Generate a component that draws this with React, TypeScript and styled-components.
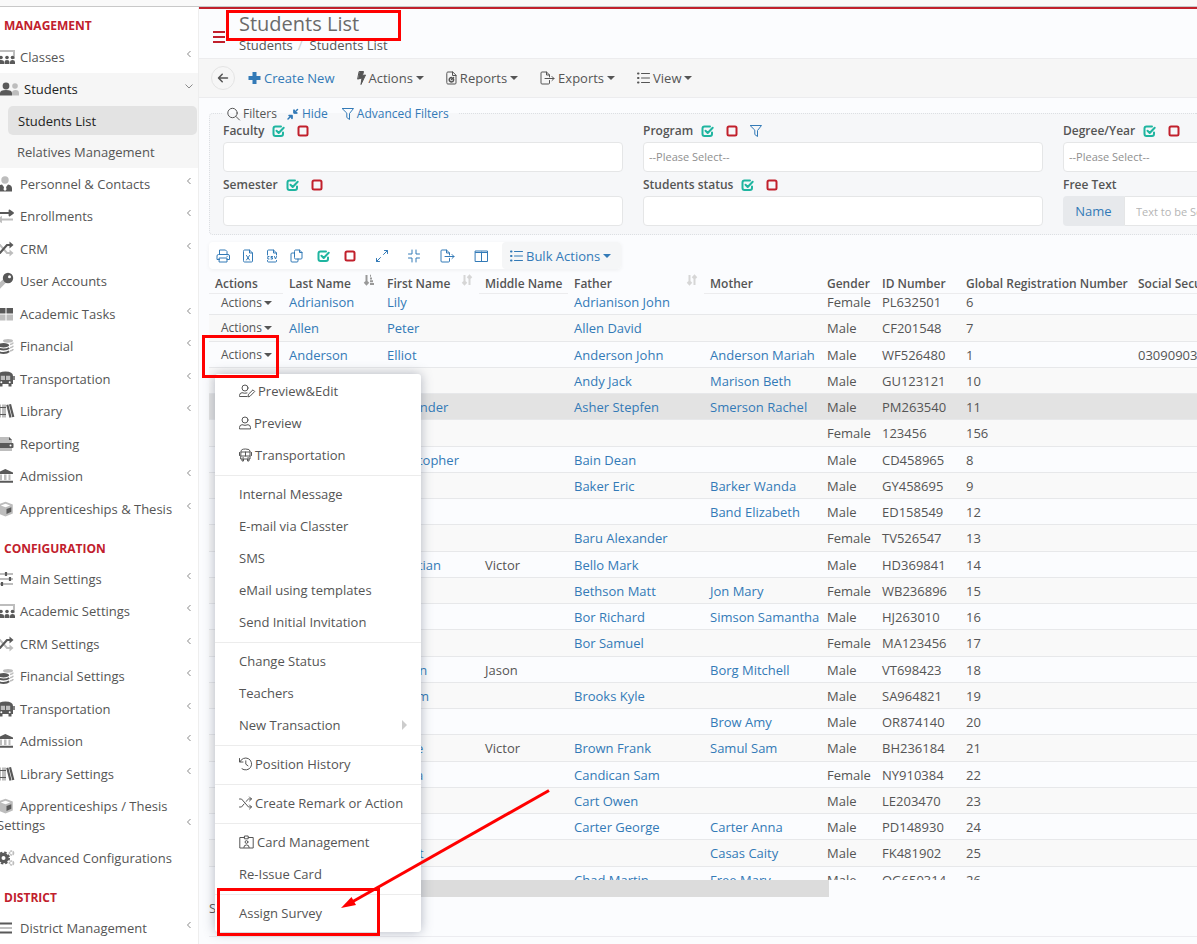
import React from 'react';
import styled, { createGlobalStyle, css } from 'styled-components';
import { FaArrowLeft } from 'react-icons/fa6';

const Global = createGlobalStyle`
  *, *::before, *::after { box-sizing: border-box; }
  html, body, #root { height: 100%; }
  body {
    margin: 0;
    overflow: hidden;
    background: #fbfcfe;
    color: #555;
    font: 13px/18px 'Open Sans', 'Liberation Sans', sans-serif;
  }
  button, input, select { font: inherit; color: inherit; }
  button { padding: 0; border: 0; background: none; cursor: pointer; }
  a { color: inherit; text-decoration: none; }
  ul { list-style: none; margin: 0; padding: 0; }
  svg { display: block; flex: none; overflow: visible; }
`;

const DARK = '#595959';
const LIGHT = '#bdbdbd';
const BLUE = '#337ab7';
const RED = '#c1202c';
const GREEN = '#1fb5a0';

/* ---------- icons ---------- */

type IconName =
  | 'classes' | 'students' | 'person' | 'swap' | 'shuffle' | 'key' | 'grid' | 'coins' | 'bus'
  | 'books' | 'drive' | 'bank' | 'cube' | 'sliders' | 'gears' | 'bars';

const duotone: Record<IconName, React.ReactNode> = {
  classes: (
    <>
      <path d="M0 2h17v8" fill="none" stroke={LIGHT} strokeWidth="2" />
      <g fill={DARK}>
        <circle cx="4" cy="8.500" r="1.800" /><circle cx="10" cy="8.500" r="1.800" /><circle cx="15.500" cy="8.500" r="1.800" />
        <path d="M1 15v-2q0-2 3-2t3 2v2zM7.500 15v-2q0-2 2.500-2t2.500 2v2zM13 15v-2q0-2 2.500-2t2.500 2v2z" />
      </g>
    </>
  ),
  students: (
    <>
      <g fill={LIGHT}><circle cx="15" cy="5" r="2.800" /><path d="M12 14.500V12q0-3 3.500-3t3.500 3v2.500z" /></g>
      <g fill={DARK}><circle cx="6" cy="5" r="3.400" /><path d="M0 14.500v-2.500q0-3 6-3t6 3v2.500z" /></g>
    </>
  ),
  person: (
    <>
      <circle cx="8" cy="4" r="3.700" fill={LIGHT} />
      <path d="M1 15.500v-3q0-3.500 4-4l3 4 3-4q4 .5 4 4v3z" fill={DARK} />
      <path d="M7.300 9.500h1.500l.7 4-1.500 1.500-1.500-1.500z" fill="#fff" />
    </>
  ),
  swap: (
    <>
      <path d="M1 5h12M12.500 2.500L16 5l-3.500 2.500z" stroke={DARK} strokeWidth="1.800" fill={DARK} strokeLinejoin="round" />
      <path d="M16 11.500H4M4 9.500L1 11.500l3 2z" stroke={LIGHT} strokeWidth="1.800" fill={LIGHT} />
    </>
  ),
  shuffle: (
    <>
      <path d="M0 4h3l7 8h3" stroke={LIGHT} strokeWidth="2" fill="none" />
      <path d="M12.500 8.500L16.500 12l-4 3.500z" fill={LIGHT} />
      <path d="M0 12h3l7-8h3" stroke={DARK} strokeWidth="2.200" fill="none" />
      <path d="M12.500 .5L16.500 4l-4 3.500z" fill={DARK} />
    </>
  ),
  key: (
    <>
      <path d="M1 14.500l7-7" stroke={LIGHT} strokeWidth="4.500" />
      <circle cx="11" cy="5" r="5.200" fill={DARK} />
      <circle cx="12.500" cy="3.800" r="1.500" fill="#fff" />
    </>
  ),
  grid: (
    <>
      <path d="M1.500 2H8.500v5.500h-7zM9.500 2h6.500v5.500h-6.500z" fill={DARK} />
      <path d="M1.500 8.500H8.500V14.500h-7zM9.500 8.500h6.500V14.500h-6.500z" fill={LIGHT} />
    </>
  ),
  coins: (
    <>
      <ellipse cx="11" cy="2.800" rx="5" ry="1.900" fill={LIGHT} />
      <path d="M13 6.500q3-.7 3-2M13 9.800q3-.7 3-2M13 13q3-.7 3-2" stroke={LIGHT} strokeWidth="1.500" fill="none" />
      <ellipse cx="6.500" cy="7.300" rx="5.700" ry="2.200" fill={DARK} />
      <path d="M.8 10q2 1.500 5.700 1.500T12.200 10M.8 13.300q2 1.700 5.700 1.700t5.700-1.700" stroke={DARK} strokeWidth="1.900" fill="none" />
    </>
  ),
  bus: (
    <>
      <path d="M1 5q0-4.500 7.500-4.500T16 5v8H1zM2.500 13h3v2.500h-3zM11.500 13h3v2.500h-3z" fill={DARK} />
      <path d="M3.800 4.800h4.200v4.200H3.800zM9 4.800h4.200v4.200H9z" fill={LIGHT} />
      <circle cx="4.300" cy="11.200" r="1" fill="#fff" /><circle cx="12.700" cy="11.200" r="1" fill="#fff" />
      <path d="M0 5v4M17 5v4" stroke={DARK} strokeWidth="1.500" />
    </>
  ),
  books: (
    <>
      <path d="M1 1.500h3v13H1zM5 1.500h4v13H5z" fill={LIGHT} />
      <path d="M1 4.500h8M1 11.500h8" stroke={DARK} strokeWidth="1" />
      <path d="M10.300 1.700L13.500 14.500M13 1.300L16.300 14" stroke={DARK} strokeWidth="2.200" />
    </>
  ),
  drive: (
    <>
      <path d="M2 1h10l3 3v11H2z" fill={LIGHT} />
      <path d="M12 1v3h3z" fill={DARK} />
      <rect x="0" y="7" width="16.500" height="5" rx="1" fill={DARK} />
      <circle cx="13.500" cy="9.500" r="1" fill="#fff" />
    </>
  ),
  bank: (
    <>
      <path d="M3 6.500h2V12H3zM7 6.500h2.500V12H7zM11.500 6.500h2V12h-2z" fill={LIGHT} />
      <path d="M.5 4.500L8.300 1 16 4.500v1.500H.5zM.5 12.800h15.500v1.900H.5z" fill={DARK} />
    </>
  ),
  cube: (
    <>
      <path d="M8.500.8l7.300 2.700v9L8.500 15.500 1 12.500v-9z" fill={LIGHT} />
      <path d="M8.500 2.800l4.700 1.700-4.700 1.800-4.700-1.800z" fill="#fff" />
      <path d="M9.500 8l4.800-1.800v4.600L9.500 13z" fill={DARK} />
    </>
  ),
  sliders: (
    <>
      <path d="M1 3h15M1 8h15M1 13h15" stroke={LIGHT} strokeWidth="1.800" />
      <path d="M9 1v4M13 6v4M5 11v4" stroke={DARK} strokeWidth="2.200" />
    </>
  ),
  gears: (
    <>
      <circle cx="6.500" cy="8" r="3.600" stroke={DARK} strokeWidth="3.200" fill="none" />
      <circle cx="6.500" cy="8" r="5.600" stroke={DARK} strokeWidth="1.800" strokeDasharray="2.500 1.900" fill="none" />
      <circle cx="14.500" cy="3" r="2" stroke={LIGHT} strokeWidth="1.700" strokeDasharray="1.800 .6" fill="none" />
      <circle cx="14.500" cy="13" r="2" stroke={LIGHT} strokeWidth="1.700" strokeDasharray="1.800 .6" fill="none" />
    </>
  ),
  bars: (
    <>
      <path d="M1 3.500h14M1 12.500h14" stroke={DARK} strokeWidth="1.900" />
      <path d="M1 8h14" stroke={LIGHT} strokeWidth="1.900" />
    </>
  ),
};

const NavIcon = ({ name }: { name: IconName }) => (
  <svg width={name === 'students' ? 20 : 16} height="16" viewBox={name === 'students' ? '0 0 20 16' : '0 0 16 16'} aria-hidden="true">
    {duotone[name]}
  </svg>
);

const Line = ({ children, w = 14, sw = 1, color = 'currentColor' }: { children: React.ReactNode; w?: number; sw?: number; color?: string }) => (
  <svg width={w} height="14" viewBox={`0 0 ${w} 14`} fill="none" stroke={color} strokeWidth={sw} strokeLinejoin="round" strokeLinecap="round" aria-hidden="true">
    {children}
  </svg>
);

const CheckIcon = () => (
  <Line w={13} sw={2} color={GREEN}>
    <path d="M9 2.500H3.500Q1.500 2.500 1.500 4.500v5.500q0 2 2 2h5.500q2 0 2-2V8.500" />
    <path d="M4.500 6.800l2.200 2.200 5-5.300" />
  </Line>
);
const EmptyIcon = () => (
  <Line w={12} sw={2} color={RED}><rect x="1.500" y="2.500" width="9" height="9" rx="1.500" /></Line>
);
const FunnelIcon = () => (
  <Line w={12}><path d="M.5 1.500h11L7.500 6.500v6L4.800 10.500v-4z" /></Line>
);
const ListIcon = () => (
  <Line w={13} sw={1}>
    <path d="M4.500 2.500h8M4.500 7h8M4.500 11.500h8" />
    <path d="M1 2.500h.5M1 7h.5M1 11.500h.5" strokeWidth="2" />
  </Line>
);
const ExportIcon = () => (
  <Line w={15}>
    <path d="M9.500 9.500V12q0 1-1 1h-6.500q-1 0-1-1V2q0-1 1-1h4.500l3 3v2M6.500 1v3h3M5 7.500h9M12 5.500l2 2-2 2" />
  </Line>
);
const PlusIcon = () => (
  <Line w={13} sw={4}><path d="M6.500 3v8M2.500 7h8" strokeLinecap="square" /></Line>
);
const BoltIcon = () => (
  <Line w={9}><path d="M2.500.5h4L5.500 4.500l3-.5L4 13.500l1-6.500-4 1z" fill="currentColor" /></Line>
);

const Chevron = ({ down }: { down?: boolean }) => (
  <svg width="8" height="8" viewBox="0 0 8 8" fill="none" stroke="#8a8a8a" strokeWidth="1" aria-hidden="true">
    <path d={down ? 'M.5 2.500L4 6l3.500-3.500' : 'M5.500 1L2.500 4l3 3'} />
  </svg>
);

const Caret = styled.span`
  flex: none;
  border: 4px solid transparent;
  border-top-color: currentColor;
  border-bottom: 0;
`;

/* ---------- page frame ---------- */

const Page = styled.div`
  position: relative;
  display: flex;
  flex-direction: column;
  height: 100%;
  overflow: hidden;
`;
const TopStrip = styled.div`
  flex: none;
  height: 7px;
  background: #f9f9f9;
  border-bottom: 1px solid #c8c8c8;
`;
const Body = styled.div`
  flex: 1;
  display: flex;
  min-height: 0;
`;

/* ---------- sidebar ---------- */

const Sidebar = styled.nav`
  flex: none;
  width: 199px;
  overflow: hidden;
  background: #fff;
  border-right: 1px solid #eee;
  padding-top: 10px;
`;
const GroupTitle = styled.h2`
  margin: 0 0 6px 4px;
  font-size: 12px;
  line-height: 18px;
  font-weight: 700;
  color: ${RED};
  ul + & { margin-top: 15px; margin-bottom: 5px; }
`;
const NavItem = styled.li<{ $open?: boolean }>`
  padding-bottom: ${p => (p.$open ? 1 : 0)}px;
  background: ${p => (p.$open ? '#f6f6f6' : 'transparent')};
`;
const NavLink = styled.a<{ $open?: boolean }>`
  display: flex;
  margin-left: ${p => (p.$open ? 0 : -3)}px;
  padding: 7px 5px 6px 0;
  line-height: 19px;
  color: ${p => (p.$open ? '#222' : '#555')};
  ${NavItem}:nth-child(even) > & { padding-bottom: 7px; }
  svg { display: inline-block; vertical-align: -3px; }
`;
const NavLabel = styled.span<{ $open?: boolean }>`
  flex: 1;
  > svg { margin-right: ${p => (p.$open ? 4 : 7)}px; }
`;
const ChevronBox = styled.span`
  align-self: flex-end;
  display: flex;
  align-items: center;
  height: 19px;
  padding-bottom: 8px;
`;
const SubLink = styled.a<{ $active?: boolean }>`
  display: block;
  padding: 8px 9px 6px;
  margin: 0 1px 0 8px;
  line-height: 18px;
  ${p => p.$active && css`
    margin-top: 1px;
    padding: 6px 10px 5px;
    background: #e3e3e3;
    border-radius: 5px;
    color: #222;
  `}
`;

type Nav = { icon: IconName; label: string; leaf?: boolean };
const management: Nav[] = [
  { icon: 'person', label: 'Personnel & Contacts' },
  { icon: 'swap', label: 'Enrollments' },
  { icon: 'shuffle', label: 'CRM' },
  { icon: 'key', label: 'User Accounts', leaf: true },
  { icon: 'grid', label: 'Academic Tasks' },
  { icon: 'coins', label: 'Financial' },
  { icon: 'bus', label: 'Transportation' },
  { icon: 'books', label: 'Library' },
  { icon: 'drive', label: 'Reporting', leaf: true },
  { icon: 'bank', label: 'Admission' },
  { icon: 'cube', label: 'Apprenticeships & Thesis' },
];
const configuration: Nav[] = [
  { icon: 'sliders', label: 'Main Settings' },
  { icon: 'classes', label: 'Academic Settings' },
  { icon: 'shuffle', label: 'CRM Settings' },
  { icon: 'coins', label: 'Financial Settings' },
  { icon: 'bus', label: 'Transportation' },
  { icon: 'bank', label: 'Admission' },
  { icon: 'books', label: 'Library Settings' },
  { icon: 'cube', label: 'Apprenticeships / Thesis Settings' },
  { icon: 'gears', label: 'Advanced Configurations', leaf: true },
];

const NavRow = ({ icon, label, leaf }: Nav) => (
  <NavItem>
    <NavLink href="#">
      <NavLabel><NavIcon name={icon} />{label}</NavLabel>
      {!leaf && <ChevronBox><Chevron /></ChevronBox>}
    </NavLink>
  </NavItem>
);

/* ---------- main column ---------- */

const Main = styled.main`
  flex: 1;
  min-width: 0;
  overflow: hidden;
  border-top: 2px solid ${RED};
`;
const Header = styled.header`
  display: flex;
  align-items: flex-start;
  height: 49px;
  padding: 3px 14px;
`;
const Burger = styled.button`
  display: flex;
  flex-direction: column;
  gap: 3px;
  width: 12px;
  margin: 19px 14px 0 0;
  span { height: 2px; background: ${RED}; }
`;
const Title = styled.h1`
  margin: 0;
  font-size: 20px;
  line-height: 24px;
  font-weight: 400;
  color: #6a6a6a;
`;
const Crumbs = styled.div`
  display: flex;
  gap: 5px;
  i { color: #ccc; font-style: normal; }
  a:last-child { margin-left: 2px; }
`;
const Toolbar = styled.div`
  display: flex;
  align-items: center;
  height: 40px;
  padding-left: 12px;
  background: #f6f6f6;
  border: 1px solid #ececee;
  border-width: 1px 0;
`;
const BackButton = styled.button`
  display: flex;
  align-items: center;
  justify-content: center;
  width: 24px;
  height: 24px;
  margin-right: 13px;
  border: 1px solid #e4e4e4;
  border-radius: 50%;
`;
const ToolButton = styled.button<{ $blue?: boolean }>`
  display: flex;
  align-items: center;
  gap: 3px;
  margin-right: 22px;
  color: ${p => (p.$blue ? BLUE : '#555')};
`;

/* ---------- filters ---------- */

const Content = styled.div`
  position: relative;
  padding: 7px 0 0 10px;
`;
const FilterSet = styled.fieldset`
  min-width: 0;
  margin: 0;
  padding: 0 0 8px 13px;
  border: 1px dotted #dcdfe3;
  border-right: 0;
  border-radius: 4px 0 0 4px;
  background: #f6f7f9;
`;
const Legend = styled.legend`
  display: flex;
  align-items: center;
  height: 17px;
  padding: 0 10px 0 4px;
  font-size: 12px;
`;
const LegendItem = styled.button<{ $gap?: number }>`
  display: flex;
  align-items: center;
  gap: 3px;
  margin-right: ${p => p.$gap ?? 0}px;
  color: ${BLUE};
`;
const LegendText = styled.span`
  display: flex;
  align-items: center;
  gap: 3px;
  margin-right: 10px;
`;
const FilterGrid = styled.div`
  display: grid;
  grid-template-columns: repeat(3, minmax(400px, 1fr));
  gap: 4px 20px;
`;
const LabelRow = styled.div`
  display: flex;
  align-items: center;
  height: 18px;
  margin-bottom: 2px;
  color: ${BLUE};
  label { margin-right: 8px; font-size: 12px; font-weight: 600; color: #555; }
  button { margin-right: 12px; }
`;
const field = css`
  display: block;
  width: 100%;
  height: 30px;
  padding: 0 5px;
  border: 1px solid #e5e6e7;
  border-radius: 4px;
  background: #fff;
  font-size: 11px;
  color: #8f8f8f;
  appearance: none;
  &::placeholder { color: #b5b5b5; }
`;
const TextBox = styled.input`${field}`;
const SelectBox = styled.select`${field}`;
const Combined = styled.div`
  display: flex;
  > button {
    flex: none;
    width: 61px;
    border-radius: 4px 0 0 4px;
    background: #e7e9ec;
    color: ${BLUE};
  }
  > input { padding-left: 11px; border-radius: 0 4px 4px 0; }
`;

const Field = ({ id, label, checks = true, funnel, children }: {
  id: string; label: string; checks?: boolean; funnel?: boolean; children: React.ReactNode;
}) => (
  <div>
    <LabelRow>
      <label htmlFor={id}>{label}</label>
      {checks && (
        <>
          <button type="button" aria-label="Select all"><CheckIcon /></button>
          <button type="button" aria-label="Clear"><EmptyIcon /></button>
        </>
      )}
      {funnel && <button type="button" aria-label="Filter"><FunnelIcon /></button>}
    </LabelRow>
    {children}
  </div>
);

/* ---------- grid tools and table ---------- */

const GridTools = styled.div`
  display: flex;
  width: max-content;
  height: 27px;
  margin-top: 7px;
  border-radius: 4px;
  background: #fff;
  color: ${BLUE};
  box-shadow: 0 1px 4px rgba(0, 0, 0, 0.06);
`;
const IconRow = styled.div`
  display: flex;
  align-items: center;
  gap: 12px;
  padding: 0 14px 0 7px;
  > :nth-child(n + 5) { margin-left: 2px; }
  > :nth-child(n + 7) { margin-left: 8px; }
`;
const BulkButton = styled.button`
  display: flex;
  align-items: center;
  gap: 3px;
  padding: 0 10px 0 8px;
  border-radius: 4px;
  background: #f5f6f7;
  color: ${BLUE};
`;
const TableScroll = styled.div`
  height: 611px;
  overflow: hidden;
`;
const Table = styled.table`
  width: 100%;
  min-width: 1300px;
  table-layout: fixed;
  border-spacing: 0;
`;
const Th = styled.th<{ $sort?: boolean }>`
  height: 25px;
  padding: 5px 0 0 6px;
  border-bottom: 1px solid ${p => (p.$sort ? 'transparent' : '#ececee')};
  text-align: left;
  font-size: 12px;
  font-weight: 600;
  white-space: nowrap;
  > div { display: flex; justify-content: space-between; padding-right: 7px; }
`;
const Row = styled.tr<{ $hover?: boolean }>`
  height: 26px;
  background: transparent;
  &:nth-child(even) { background: #f9f9f9; }
  &:nth-child(4n + 2) { height: 27px; }
  &:first-child { height: 21px; }
  ${p => p.$hover && css`&& { background: #e3e3e3; }`}
`;
const Td = styled.td`
  padding: 0 0 0 6px;
  border-bottom: 1px solid #e7e8ea;
  white-space: nowrap;
  line-height: 18px;
  a { color: ${BLUE}; }
  ${Row}:first-child > & { padding-bottom: 2px; line-height: 16px; vertical-align: top; }
`;
const RowButton = styled.button`
  display: flex;
  align-items: center;
  gap: 2px;
  margin-left: 6px;
  font-size: 12px;
  line-height: 18px;
`;
const ScrollBar = styled.div`
  width: 610px;
  height: 17px;
  margin-left: 10px;
  background: #dcdcdc;
`;
const Footer = styled.div`
  height: 40px;
  padding-top: 2px;
  border-bottom: 1px solid #ececf0;
`;

const SortIcon = ({ active }: { active?: boolean }) => (
  <svg width="10" height="10" viewBox="0 0 10 10" fill="none" stroke={active ? '#999' : '#d6d6d6'} strokeWidth="2" aria-hidden="true">
    <path d="M2.500 0v9M.5 7l2 2.200 2-2.200" />
    {active ? <path d="M6 .8h1M6 3.500h2M6 6.200h3M6 8.900h4" /> : <path d="M7.500 10V1M5.500 3l2-2.200 2 2.200" />}
  </svg>
);

const columns: { title: string; width?: number; sort?: 'active' | 'idle' }[] = [
  { title: 'Actions', width: 74 },
  { title: 'Last Name', width: 98, sort: 'active' },
  { title: 'First Name', width: 98, sort: 'idle' },
  { title: 'Middle Name', width: 89 },
  { title: 'Father', width: 136, sort: 'idle' },
  { title: 'Mother', width: 117 },
  { title: 'Gender', width: 55 },
  { title: 'ID Number', width: 84 },
  { title: 'Global Registration Number', width: 172 },
  { title: 'Social Security Number' },
];

type Student = [string, string, string, string, string, string, string, string, string?];
const students: Student[] = [
  ['Adrianison', 'Lily', '', 'Adrianison John', '', 'Female', 'PL632501', '6'],
  ['Allen', 'Peter', '', 'Allen David', '', 'Male', 'CF201548', '7'],
  ['Anderson', 'Elliot', '', 'Anderson John', 'Anderson Mariah', 'Male', 'WF526480', '1', '030909038'],
  ['', '', '', 'Andy Jack', 'Marison Beth', 'Male', 'GU123121', '10'],
  ['', 'Alexander', '', 'Asher Stepfen', 'Smerson Rachel', 'Male', 'PM263540', '11'],
  ['', '', '', '', '', 'Female', '123456', '156'],
  ['', 'Christopher', '', 'Bain Dean', '', 'Male', 'CD458965', '8'],
  ['', '', '', 'Baker Eric', 'Barker Wanda', 'Male', 'GY458695', '9'],
  ['', '', '', '', 'Band Elizabeth', 'Male', 'ED158549', '12'],
  ['', '', '', 'Baru Alexander', '', 'Female', 'TV526547', '13'],
  ['', 'Christian', 'Victor', 'Bello Mark', '', 'Male', 'HD369841', '14'],
  ['', '', '', 'Bethson Matt', 'Jon Mary', 'Female', 'WB236896', '15'],
  ['', '', '', 'Bor Richard', 'Simson Samantha', 'Male', 'HJ263010', '16'],
  ['', '', '', 'Bor Samuel', '', 'Female', 'MA123456', '17'],
  ['', 'Martin', 'Jason', '', 'Borg Mitchell', 'Male', 'VT698423', '18'],
  ['', 'Callum', '', 'Brooks Kyle', '', 'Male', 'SA964821', '19'],
  ['', '', '', '', 'Brow Amy', 'Male', 'OR874140', '20'],
  ['', 'Pierre', 'Victor', 'Brown Frank', 'Samul Sam', 'Male', 'BH236184', '21'],
  ['', 'Alexia', '', 'Candican Sam', '', 'Female', 'NY910384', '22'],
  ['', '', '', 'Cart Owen', '', 'Male', 'LE203470', '23'],
  ['', '', '', 'Carter George', 'Carter Anna', 'Male', 'PD148930', '24'],
  ['', 'Albert', '', '', 'Casas Caity', 'Male', 'FK481902', '25'],
  ['', '', '', 'Chad Martin', 'Free Mary', 'Male', 'OG650314', '26'],
];

/* ---------- row menu ---------- */

const Menu = styled.ul`
  position: absolute;
  top: 276px;
  left: 16px;
  width: 206px;
  padding: 1px 0 3px;
  background: #fff;
  border-radius: 3px;
  box-shadow: 0 0 12px rgba(86, 96, 117, 0.45);
`;
const MenuItem = styled.li<{ $split?: boolean }>`
  ${p => p.$split && css`
    margin-top: 4px;
    padding-top: 2px;
    border-top: 1px solid #ececec;
  `}
  button {
    display: flex;
    align-items: center;
    gap: 3px;
    width: 100%;
    height: 32px;
    padding: 0 14px 0 24px;
  }
`;
const SubArrow = styled.span`
  margin-left: auto;
  border: 5px solid transparent;
  border-left-color: #ccc;
  border-right: 0;
`;

const menu: { label: string; split?: boolean; sub?: boolean; icon?: React.ReactNode }[] = [
  {
    label: 'Preview&Edit',
    icon: (
      <Line w={16}>
        <circle cx="6" cy="4" r="3" />
        <path d="M8 12.500H.5v-1q0-2.500 2.500-2.800 2.500 1 5 .3M9 12.500l.5-2.300 4.500-4.400 1.700 1.700-4.400 4.500z" />
      </Line>
    ),
  },
  {
    label: 'Preview',
    icon: (
      <Line w={12}>
        <circle cx="6" cy="4" r="3" />
        <path d="M.5 12.500v-1q0-2.500 2.500-2.800 3 1.300 6 0 2.500.3 2.500 2.800v1z" />
      </Line>
    ),
  },
  {
    label: 'Transportation',
    icon: (
      <Line w={13}>
        <path d="M2 3q0-2 4.500-2T11 3v8H2zM2 4h9M2 8h9M6.500 4v4M3 11v2h1.500v-2M8.500 11v2H10v-2M.5 4.500v3M12.500 4.500v3M4 9.500h.2M9 9.500h.2" />
      </Line>
    ),
  },
  { label: 'Internal Message', split: true },
  { label: 'E-mail via Classter' },
  { label: 'SMS' },
  { label: 'eMail using templates' },
  { label: 'Send Initial Invitation' },
  { label: 'Change Status', split: true },
  { label: 'Teachers' },
  { label: 'New Transaction', sub: true },
  {
    label: 'Position History',
    split: true,
    icon: <Line w={13}><path d="M.5 1.500v3.500h3.500M1 4.800A6 6 0 1 1 3 11.800M6.800 3.800v3.400l2.200 1.600" /></Line>,
  },
  {
    label: 'Create Remark or Action',
    split: true,
    icon: <Line w={13}><path d="M.5 3h2l7 8h3M.5 11h2l2.500-3M7 5.500L9.500 3h3M10.500 1l2 2-2 2M10.500 9l2 2-2 2" /></Line>,
  },
  {
    label: 'Card Management',
    split: true,
    icon: (
      <Line w={15}>
        <path d="M5.500 2.500H.8v10.500h13.400V2.500H9.500M5.800 1h3.400v2.800H5.800z" />
        <circle cx="7.500" cy="7" r="1.400" />
        <path d="M4.800 12.500q0-2.600 2.700-2.600t2.700 2.600" />
      </Line>
    ),
  },
  { label: 'Re-Issue Card' },
  { label: 'Assign Survey', split: true },
];

const Callouts = styled.svg`
  position: absolute;
  top: 0;
  left: 0;
  pointer-events: none;
`;

export default function App() {
  return (
    <Page>
      <Global />
      <TopStrip />
      <Body>
        <Sidebar>
          <GroupTitle>MANAGEMENT</GroupTitle>
          <ul>
            <NavRow icon="classes" label="Classes" />
          </ul>
          <ul>
            <NavItem $open>
              <NavLink href="#" $open>
                <NavLabel $open><NavIcon name="students" />Students</NavLabel>
                <ChevronBox><Chevron down /></ChevronBox>
              </NavLink>
              <SubLink href="#" $active>Students List</SubLink>
              <SubLink href="#">Relatives Management</SubLink>
            </NavItem>
          </ul>
          <ul>{management.map(n => <NavRow key={n.label} {...n} />)}</ul>
          <GroupTitle>CONFIGURATION</GroupTitle>
          <ul>{configuration.map(n => <NavRow key={n.label} {...n} />)}</ul>
          <GroupTitle>DISTRICT</GroupTitle>
          <ul>
            <NavRow icon="bars" label="District Management" />
          </ul>
        </Sidebar>

        <Main>
          <Header>
            <Burger aria-label="Toggle menu"><span /><span /><span /></Burger>
            <div>
              <Title>Students List</Title>
              <Crumbs><a href="#">Students</a><i>/</i><a href="#">Students List</a></Crumbs>
            </div>
          </Header>
          <Toolbar>
            <BackButton aria-label="Back"><FaArrowLeft size={12} /></BackButton>
            <ToolButton $blue><PlusIcon />Create New</ToolButton>
            <ToolButton><BoltIcon />Actions<Caret /></ToolButton>
            <ToolButton>
              <Line w={11}>
                <path d="M.8 2q0-1 1-1h5l3.200 3.200V12q0 1-1 1H1.800q-1 0-1-1zM6.500 1v3.500H10" />
                <path d="M7.500 8a2.200 2.200 0 1 1-2-1.500M5.500 8.500l2-2" strokeWidth="1.500" />
              </Line>
              Reports<Caret />
            </ToolButton>
            <ToolButton><ExportIcon />Exports<Caret /></ToolButton>
            <ToolButton><ListIcon />View<Caret /></ToolButton>
          </Toolbar>

          <Content>
            <FilterSet>
              <Legend>
                <LegendText>
                  <Line w={13}><circle cx="5.500" cy="6" r="4.700" /><path d="M9 9.500l3.500 3.500" /></Line>
                  Filters
                </LegendText>
                <LegendItem type="button" $gap={14}>
                  <Line w={12}>
                    <path d="M10.500 2.500L7 6M7 3v3h3M1 12l3.500-3.500M2 8.500h3v3" strokeWidth="1.500" />
                    <path d="M7 3.500v2.500h2.500zM2.500 8.500H5V11z" fill="currentColor" />
                  </Line>
                  Hide
                </LegendItem>
                <LegendItem type="button"><FunnelIcon />Advanced Filters</LegendItem>
              </Legend>
              <FilterGrid>
                <Field id="faculty" label="Faculty"><TextBox id="faculty" /></Field>
                <Field id="program" label="Program" funnel>
                  <SelectBox id="program"><option>--Please Select--</option></SelectBox>
                </Field>
                <Field id="degree" label="Degree/Year">
                  <SelectBox id="degree"><option>--Please Select--</option></SelectBox>
                </Field>
                <Field id="semester" label="Semester"><TextBox id="semester" /></Field>
                <Field id="status" label="Students status"><TextBox id="status" /></Field>
                <Field id="free" label="Free Text" checks={false}>
                  <Combined>
                    <button type="button">Name</button>
                    <TextBox id="free" placeholder="Text to be Searched" />
                  </Combined>
                </Field>
              </FilterGrid>
            </FilterSet>

            <GridTools>
              <IconRow>
                <button aria-label="Print">
                  <Line><path d="M3.500 5.500V1h6l1.500 1.500v3M3.500 10.500H1V7q0-1.500 1.500-1.500h9.500q1.500 0 1.500 1.500v3.500h-2.500M3.500 9h7.500v4H3.500zM11 7.300h.3" /></Line>
                </button>
                <button aria-label="Excel">
                  <Line w={12}><path d="M1.500 2q0-1 1-1H7.500l3 3v8q0 1-1 1h-7q-1 0-1-1zM7.500 1v3h3M4.500 6.500l3 4.500M7.500 6.500l-3 4.500" /></Line>
                </button>
                <button aria-label="CSV">
                  <Line w={12}>
                    <path d="M1.500 6V2q0-1 1-1H7.500l3 3v2M1.500 11.500v.5q0 1 1 1h7q1 0 1-1v-.5M7.500 1v3h3" />
                    <path d="M3 7.500H1.800v2.500H3M6.500 7.500H5v1.200h1.500V10H5M8.500 7.500l1 2.500 1-2.500" />
                  </Line>
                </button>
                <button aria-label="Copy">
                  <Line w={13}><path d="M4.500 2q0-1 1-1h4l2.500 2.500V9q0 1-1 1H5.500q-1 0-1-1zM4.500 4H2Q1 4 1 5v7q0 1 1 1h5q1 0 1-1v-2M9.500 1v2.500H12" /></Line>
                </button>
                <button aria-label="Select all"><CheckIcon /></button>
                <button aria-label="Clear selection"><EmptyIcon /></button>
                <button aria-label="Expand">
                  <Line w={12}><path d="M7.500 5.500L11.500 1.500M8.500 1.500h3v3M4.500 8.500L.5 12.500M.5 9.500v3h3" /></Line>
                </button>
                <button aria-label="Compress">
                  <Line w={12}><path d="M4 1v4H.5M8 1v4h3.500M4 13V9H.5M8 13V9h3.500" /></Line>
                </button>
                <button aria-label="Export"><ExportIcon /></button>
                <button aria-label="Columns">
                  <Line w={13}><path d="M.5 2h12v10.500H.5zM.5 3.500h12M6.500 3v9.500" /></Line>
                </button>
              </IconRow>
              <BulkButton><ListIcon />Bulk Actions<Caret /></BulkButton>
            </GridTools>

            <TableScroll>
              <Table>
                <colgroup>
                  {columns.map(c => <col key={c.title} width={c.width} />)}
                </colgroup>
                <thead>
                  <tr>
                    {columns.map(c => (
                      <Th key={c.title} $sort={!!c.sort}>
                        {c.sort ? <div>{c.title}<SortIcon active={c.sort === 'active'} /></div> : c.title}
                      </Th>
                    ))}
                  </tr>
                </thead>
                <tbody>
                  {students.map(([last, first, middle, father, mother, gender, id, reg, social], i) => (
                    <Row key={id} $hover={i === 4}>
                      <Td>{i < 3 && <RowButton>Actions<Caret /></RowButton>}</Td>
                      <Td>{last && <a href="#">{last}</a>}</Td>
                      <Td>{first && <a href="#">{first}</a>}</Td>
                      <Td>{middle}</Td>
                      <Td>{father && <a href="#">{father}</a>}</Td>
                      <Td>{mother && <a href="#">{mother}</a>}</Td>
                      <Td>{gender}</Td>
                      <Td>{id}</Td>
                      <Td>{reg}</Td>
                      <Td>{social}</Td>
                    </Row>
                  ))}
                </tbody>
              </Table>
            </TableScroll>
            <ScrollBar />
            <Footer>Showing</Footer>

            <Menu>
              {menu.map(m => (
                <MenuItem key={m.label} $split={m.split}>
                  <button type="button">{m.icon}{m.label}{m.sub && <SubArrow />}</button>
                </MenuItem>
              ))}
            </Menu>
          </Content>
        </Main>
      </Body>

      <Callouts width="600" height="944" viewBox="0 0 600 944" fill="none" stroke="#f00" strokeWidth="3" aria-hidden="true">
        <rect x="227.500" y="11.500" width="172" height="28" />
        <rect x="203.500" y="336.500" width="74" height="40" />
        <rect x="218.500" y="889.500" width="160" height="45" />
        <path d="M549 790.500L352 902" />
        <path d="M341 908l10.500-11 4.500 8z" fill="#f00" stroke="none" />
      </Callouts>
    </Page>
  );
}
